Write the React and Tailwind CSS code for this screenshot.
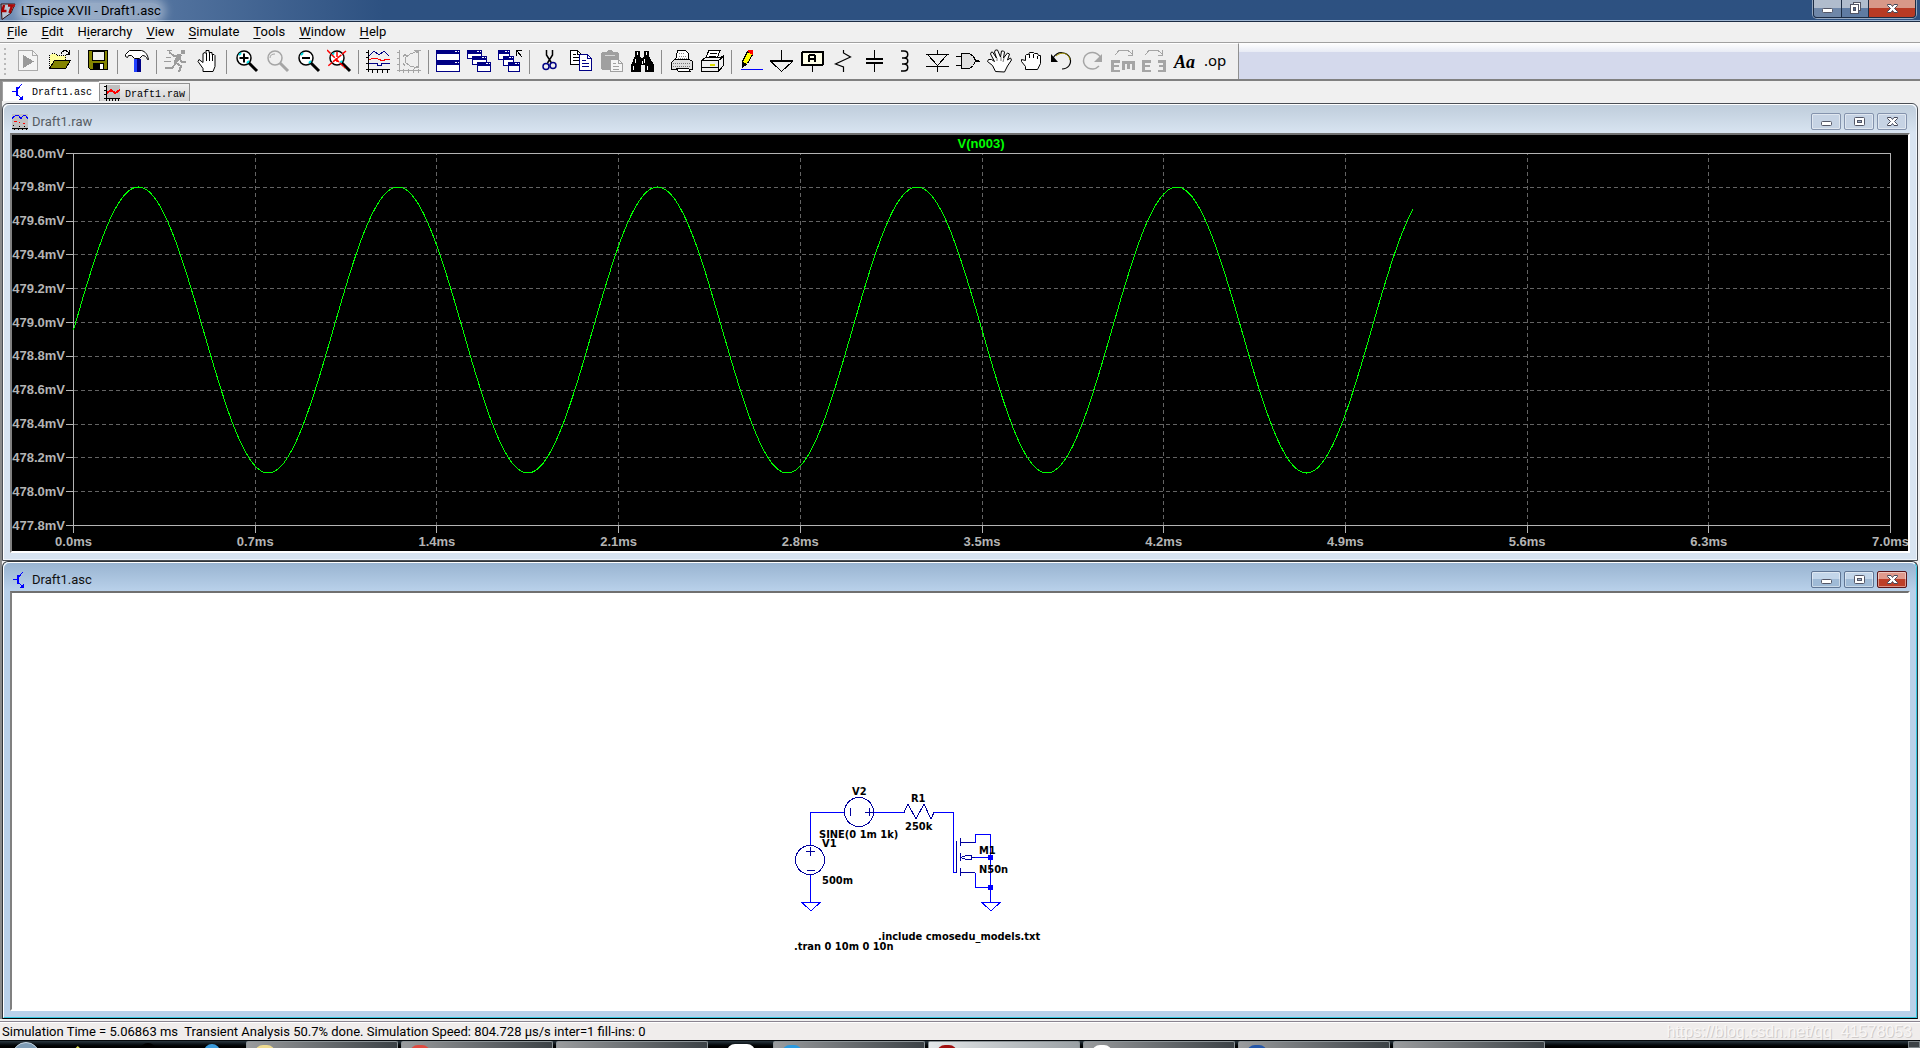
import React from "react";

const UI_FONT = "font-['Roboto','Noto_Sans_CJK_SC',sans-serif]";

/* ---------- toolbar drawings, each on a 25 x 24 grid ---------- */

const Lens = ({ ring, handle, children }) => (
  <>
    <circle cx="10" cy="9" r="7" fill={ring === "#000" ? "#fff" : "#efefef"} stroke={ring} strokeWidth="1.500" />
    {ring === "#000" && <path d="M5 6l2-2M13 14l2-2" stroke="#00e0e8" strokeWidth="2" />}
    <path d="M15 14l8 8" stroke={handle} strokeWidth="3" />
    {children}
  </>
);

const Sheet = ({ x, y, c }) => (
  <g transform={`translate(${x} ${y})`}>
    <path d="M.5 .5h7l4 4v10h-11z" fill="#fff" stroke={c} />
    <path d="M7.500 .5v4h4M3 4.500h3M3 7.500h6M3 10.500h6" fill="none" stroke={c} />
  </g>
);

const MiniWin = ({ x, y, w = 12, h = 11 }) => (
  <g transform={`translate(${x} ${y})`}>
    <rect x=".5" y=".5" width={w} height={h} fill="#fff" stroke="#000084" />
    <rect width={w + 1} height="4" fill="#000084" />
    <path d={`M${w - 4} 1.5h2M${w - 1} 1.5h1`} stroke="#fff" />
  </g>
);

const icons = {
  Run: (
    <>
      <path d="M2.500 1.500h14l5 5v15h-19z" fill="#f4f4f4" stroke="#aaa" />
      <path d="M16.500 1.500v5h5" fill="none" stroke="#aaa" />
      <path d="M7 6l11 6.500-11 6.500z" fill="#999" />
    </>
  ),
  Open: (
    <>
      <path d="M2.500 19V6.500l2-2h4l2 2h8V12" fill="#ffff9c" stroke="#000" strokeDasharray="1 1" />
      <path d="M2.500 19.500l5-8h16l-5 8z" fill="#848400" stroke="#000" />
      <path d="M14 4.500c2-4 6-4 8 0M22.500 1v4h-4" fill="none" stroke="#000" />
    </>
  ),
  Save: (
    <>
      <path d="M2.500 1.500h19v19h-17l-2-2z" fill="#848400" stroke="#000" />
      <rect x="6" y="2" width="12" height="9" fill="#efefef" stroke="#000" />
      <rect x="7" y="14" width="11" height="7" fill="#000" />
      <rect x="14" y="15" width="3" height="5" fill="#fff" />
    </>
  ),
  "Control panel": (
    <>
      <path d="M.5 5.500l4-4h12c4 1 6 4 7 9h-1c-1-3-3-4-5-4l-3 3h-5l-3-3h-3l-1 2-2-1z" fill="#fff" stroke="#000" />
      <rect x="9" y="10" width="3" height="13" fill="#2040ff" />
      <rect x="12" y="10" width="4" height="13" fill="#000084" />
    </>
  ),
  Runner: (
    <g fill="none" stroke="#9c9c9c" strokeWidth="2">
      <circle cx="19" cy="3" r="1.500" fill="#9c9c9c" />
      <path d="M17 6l-5 8 5 3-2 6M12 14l-4 5H1M17 6l-7 1-5-4M15 9l3 4h4" />
      <path d="M15 6l-4 8" strokeWidth="4" />
      <path d="M2 8h5M0 12h7M3 1h5" strokeWidth="1" />
    </g>
  ),
  Halt: (
    <>
      <path d="M8 22.500v-3l-5-7 1-2 4 3V4.500l2-1 1 1V1.500h3v2h3v2h2l1 1v11l-2 5z" fill="#fff" stroke="#000" />
      <path d="M11.500 4v8M14.500 3v9M17.500 5v7" stroke="#000" />
    </>
  ),
  "Zoom in": <Lens ring="#000" handle="#000"><path d="M5.500 9h9M10 4.500v9" stroke="#000" strokeWidth="2" /></Lens>,
  "Zoom back": <Lens ring="#a5a5a5" handle="#a5a5a5"><path d="M5 9c0-3 2-4 5-4" fill="none" stroke="#a5a5a5" /></Lens>,
  "Zoom out": <Lens ring="#000" handle="#000"><path d="M6 9h8" stroke="#000" strokeWidth="2" /></Lens>,
  "Zoom full": (
    <Lens ring="#000" handle="#000">
      <path d="M0 1l18 18M19 2L1 17M10 3v10" stroke="#f00" strokeWidth="1.500" strokeDasharray="5 1" />
    </Lens>
  ),
  "Autorange": (
    <g fill="none">
      <path d="M2.500 1v22M0 20.500h24M0 3.500h2M0 8.500h2M0 14.500h2M6.500 21v3M11.500 21v3M16.500 21v3M21.500 21v3" stroke="#000" />
      <path d="M3 7l5-5 5 4 5-4 5 5" stroke="#000084" />
      <path d="M3 11l4-2 5 1 5 2 3-2h4" stroke="#f00" />
      <path d="M3 14.500h8v2h4v-2h9" stroke="#000084" />
    </g>
  ),
  FFT: (
    <g fill="none" stroke="#a5a5a5">
      <path d="M2.500 1v22M0 21.500h24M0 3.500h2M0 9.500h2M0 15.500h2M6.500 20v4M11.500 20v4M16.500 20v4M21.500 20v4M21.500 1v18M19 1.500h5" />
      <path d="M21 2l-8 3-5 4v4l5 4 8 2M6 8l2-3 2 3M6 14l2 3M17 1l4 3M17 20l4-3" />
    </g>
  ),
  "Tile windows": <><MiniWin x={0} y={1} w={23} h={10} /><MiniWin x={0} y={12} w={23} h={10} /></>,
  "Cascade windows": <><MiniWin x={0} y={1} w={14} h={8} /><MiniWin x={5} y={7} w={14} h={8} /><MiniWin x={10} y={13} w={13} h={9} /></>,
  "Close windows": (
    <>
      <MiniWin x={0} y={1} w={11} h={9} /><MiniWin x={5} y={7} w={10} h={9} /><MiniWin x={10} y={13} w={11} h={9} />
      <path d="M18.500 7V1.500H24M19 2l5 6" stroke="#000" fill="none" />
    </>
  ),
  Cut: (
    <g fill="none">
      <path d="M9.500 1v5l5 8M15.500 1v5l-5 8" stroke="#000" strokeWidth="1.500" />
      <circle cx="9" cy="17.500" r="3" stroke="#000084" strokeWidth="1.500" />
      <circle cx="16" cy="16.500" r="3" stroke="#000084" strokeWidth="1.500" />
    </g>
  ),
  Copy: <><Sheet x={2} y={1} c="#000" /><g transform="translate(11 5)"><path d="M.5 .5h8l4 4v12h-12z" fill="#fff" stroke="#000084" /><path d="M8.500 .5v4h4M3 6.500h4M3 9.500h7M3 12.500h7" fill="none" stroke="#000084" /></g></>,
  Paste: (
    <>
      <path d="M2 4l2-1h4l1-2h4l1 2h4l2 1v17H3l-1-1z" fill="#a0a0a0" />
      <path d="M6 6.500h10" stroke="#d8d8d8" />
      <g transform="translate(11 10)"><path d="M.5 .5h8l4 4v8h-12z" fill="#f4f4f4" stroke="#a0a0a0" /><path d="M3 4.500h3M3 7.500h6M3 10h6M8.500 .5v4h4" fill="none" stroke="#a0a0a0" /></g>
    </>
  ),
  Find: (
    <>
      <path d="M5 2h5v5l2 3 2-3V2h5v5l5 9v7h-9v-7h-4v7H1v-7l4-9z" fill="#000" />
      <path d="M7.500 3v3M16.500 3v3M5.500 10v4M14.500 10v4M3.500 17v4M17.500 17v4M12.500 12v3" stroke="#fff" />
    </>
  ),
  "Print": (
    <>
      <path d="M6.500 11l2-9.500h8l3 3V11" fill="#fff" stroke="#000" />
      <path d="M10 4.500h5M9.500 7h8M9 9.500h9" stroke="#888" strokeDasharray="1 1" />
      <path d="M2.500 13.500l3-3h15l3 2v8h-21z" fill="#ddd" stroke="#000" />
      <path d="M4 14.500h18M4 17.500h18" stroke="#777" strokeDasharray="1 1" />
      <path d="M7.500 19.500h12l2 3h-12z" fill="#fff" stroke="#000" />
    </>
  ),
  "Print setup": (
    <>
      <path d="M5 10l4-8.500h11L17 10" fill="#fff" stroke="#000" />
      <path d="M10 4.500h7M9 7h7" stroke="#000" />
      <path d="M1.500 11.500l4-3h15l3-2v10l-5 6h-17z" fill="#efefef" stroke="#000" />
      <path d="M1.500 11.500h17l5-4M18.500 11.500v11M2 18.500h17" fill="none" stroke="#000" />
      <path d="M10 15.500h5" stroke="#dede00" strokeWidth="2" />
    </>
  ),
  "Draw wire": (
    <>
      <path d="M3.500 12.500l5-10 5 3-5 9-4 3z" fill="#ff0" stroke="#000" />
      <path d="M3 12v7l5-4z" fill="#000" />
      <path d="M9 1h5v5l-5-3z" fill="#f00" />
      <path d="M2 20.500h22" stroke="#00f" />
    </>
  ),
  Ground: <><path d="M11.500 1v10" stroke="#000" /><path d="M0 12h23" stroke="#000" strokeWidth="2" /><path d="M1.500 13l10 9.500L22 13" fill="none" stroke="#000" /></>,
  "Label net": (
    <>
      <rect x="1" y="3" width="21" height="13" rx="1" fill="#ffffe7" stroke="#000" strokeWidth="2" />
      <path d="M11.500 17v6" stroke="#000" />
      <path d="M8 13V7l1-1h4l1 1v6M8 10h6" fill="none" stroke="#000" strokeWidth="2" />
    </>
  ),
  Resistor: <path d="M11.500 1v3l7 4-15 7 8 3v5" fill="none" stroke="#000" strokeWidth="1.200" />,
  Capacitor: <><path d="M11.500 1v8M11.500 15v8" stroke="#000" /><path d="M3 10h17M3 14h17" stroke="#000" strokeWidth="2" /></>,
  Inductor: <path d="M7 2h3c5 0 5 7 0 7H8h2c5 0 5 6 0 6H8h2c5 0 5 7 0 7H7" fill="none" stroke="#000" strokeWidth="1.500" />,
  Diode: <path d="M12.500 1v4M1 5.500h23M3 6l9.500 10.500L22 6M1 17.500h23M12.500 17v6" fill="none" stroke="#000" />,
  Component: <><path d="M5.500 4.500h8l4 3 2 4-2 5-4 3h-8z" fill="#e0e0e0" stroke="#000" /><path d="M0 7.500h5M0 16.500h5M19 12h5" stroke="#000" /><path d="M20 11h3v2h-3z" fill="#000" /></>,
  Move: (
    <>
      <path d="M8.500 22.500l-3-6-5-4 1-2h3l3 2L3.500 5l1-2h1l4 6-2-6 1-2h2l3 7 1-6h2l1 1-1 6 4-5 2 1-2 6 3-2 1 2-4 6-3 6z" fill="#fff" stroke="#000" />
      <path d="M10 9v3M14 8v4M17 9l-1 4" stroke="#777" />
    </>
  ),
  Drag: (
    <>
      <path d="M7.500 20.500v-3l-4-5v-2l4 1V6.500l1-1h2l1-2h4l1 1h3l1 2h2v8l-3 6z" fill="#fff" stroke="#000" />
      <path d="M11.500 5v4M15.500 5v4M19.500 7v3" stroke="#000" />
    </>
  ),
  Undo: <><path d="M4 9c5-8 14-6 17 0 2 6-2 11-8 11" fill="none" stroke="#000" strokeWidth="1.200" /><path d="M7 7c5-5 13-3 14 4" fill="none" stroke="#a09000" /><path d="M2 5v8h7z" fill="#000" /></>,
  Redo: <><path d="M21 9C17 2 9 2 5 7c-4 7 1 13 8 13 3 0 5-2 6-3" fill="none" stroke="#a5a5a5" strokeWidth="1.500" /><path d="M22 5v8h-8z" fill="#a5a5a5" /></>,
  Rotate: (
    <>
      <path d="M0 11h9v3H3v2h5v2H3v3h6v2H0zM11 12h13v9h-3v-6h-2v5h-3v-5h-2v6h-3z" fill="#a5a5a5" />
      <path d="M4 6l4-4.500h9l5 4M21.500 1v5H17" fill="none" stroke="#a5a5a5" />
    </>
  ),
  Mirror: (
    <>
      <path d="M0 11h9v3H3v2h5v2H3v3h6v2H0zM24 11h-8v3h5v2h-4v2h4v3h-5v2h8z" fill="#a5a5a5" />
      <path d="M3 6l4-4.500h9l5 4M20.500 1v5H16" fill="none" stroke="#a5a5a5" />
    </>
  ),
  Text: <text x="1" y="19" fontFamily="'Liberation Serif', serif" fontWeight="700" fontStyle="italic" fontSize="18">Aa</text>,
  "SPICE directive": <text x="0" y="17" fontFamily="'Noto Sans', sans-serif" fontSize="15">.op</text>,
};

const groups = [
  ["Run", "Open"], ["Save"], ["Control panel"], ["Runner", "Halt"],
  ["Zoom in", "Zoom back", "Zoom out", "Zoom full"], ["Autorange", "FFT"],
  ["Tile windows", "Cascade windows", "Close windows"], ["Cut", "Copy", "Paste", "Find"],
  ["Print", "Print setup"],
  ["Draw wire", "Ground", "Label net", "Resistor", "Capacitor", "Inductor", "Diode", "Component",
    "Move", "Drag", "Undo", "Redo", "Rotate", "Mirror", "Text", "SPICE directive"],
];
const smooth = new Set(["Text", "SPICE directive", "Undo", "Redo", "Inductor", "Resistor", "Cut",
  "Zoom in", "Zoom out", "Zoom back", "Zoom full", "Control panel", "Move", "Drag", "Halt"]);

function Toolbar() {
  return (
    <div className="flex h-[39px] border-t border-b-2 border-t-[#a0a0a0] border-b-[#808080]">
      <div className="flex items-center border-t border-r border-t-white border-r-[#909090] bg-[#efefef] pr-1.5 pl-1">
        <span className="mr-[7px] flex flex-col gap-[3px]">
          {[0, 1, 2, 3, 4, 5].map((i) => <i key={i} className="h-0.5 w-0.5 bg-[#b8b8b8]" />)}
        </span>
        {groups.map((g, gi) => (
          <React.Fragment key={gi}>
            {gi > 0 && <span className="mr-1 ml-[3px] h-6 w-px bg-[#8c8c8c]" />}
            {g.map((n) => (
              <button key={n} aria-label={n} className="flex w-[31px] justify-center pb-px">
                <svg width="25" height="24" viewBox="0 0 25 24" shapeRendering={smooth.has(n) ? "auto" : "crispEdges"}>{icons[n]}</svg>
              </button>
            ))}
          </React.Fragment>
        ))}
      </div>
      <div className="flex-1 bg-[#d4d9ec]">
        <div className="h-[9px] bg-linear-to-b from-white to-[#e8ebf5]" />
      </div>
    </div>
  );
}

/* ---------- window chrome ---------- */

const TransistorIcon = () => (
  <svg width="16" height="16" viewBox="0 0 16 16" fill="none" stroke="#00f" shapeRendering="crispEdges">
    <path d="M1 7.500h5M11 0L6.500 5M6 10l5 5" />
    <path d="M6 3v9" strokeWidth="2" />
    <path d="M12 11v5H7z" fill="#00f" stroke="none" />
  </svg>
);

const WaveIcon = () => (
  <svg width="16" height="16" viewBox="0 0 16 16" fill="none" shapeRendering="crispEdges">
    <rect width="16" height="16" fill="#c0c0c0" />
    <path d="M0 4.500l4-3.500h2l3 3.500 3-3.500h1l3 3.500" stroke="#00f" />
    <path d="M2 7.500h3M7 8.500h1M11 9.500h2" stroke="#f00" />
    <path d="M0 14.500h16M1 11.500h1M7 12.500h1M12 12.500h1M2.500 15v1M6.500 15v1M10.500 15v1M14.500 15v1" stroke="#000" />
  </svg>
);

const RawTabIcon = () => (
  <svg width="16" height="16" viewBox="0 0 16 16" fill="none" shapeRendering="crispEdges">
    <rect x="2" width="14" height="13" fill="#c0c0c0" />
    <path d="M2.500 0v16M0 1.500h2M0 5.500h2M0 9.500h2M0 13.500h16M5.500 14v2M8.500 14v2M11.500 14v2M14.500 14v2" stroke="#000" />
    <path d="M3 8l4-3 4 3 5-3" stroke="#f00" strokeWidth="2" />
  </svg>
);

const Logo = () => (
  <svg width="16" height="18" viewBox="0 0 16 18">
    <path d="M1 2h14l-4 9-9 6.500z" fill="#b8c4d4" stroke="#301010" />
    <path d="M4 3L2.500 9h4M8 3.500h7M12 4L9.500 11" fill="none" stroke="#a80000" strokeWidth="2.500" />
  </svg>
);

const glyphs = {
  Minimize: <rect x="2.500" y="6.500" width="10" height="4" rx="1" fill="#fff" stroke="#535666" />,
  Maximize: <><rect x="2.500" y="2.500" width="10" height="8" rx="1" fill="#fff" stroke="#535666" /><rect x="5.500" y="5.500" width="4" height="2" fill="#9fb0c8" stroke="#535666" /></>,
  Restore: <><rect x="5.500" y=".5" width="7" height="8" fill="#fff" stroke="#535666" /><rect x="2.500" y="2.500" width="8" height="9" fill="#fff" stroke="#535666" /><rect x="5.500" y="5.500" width="2" height="3" fill="#4c6a96" stroke="#535666" /></>,
  Close: <path d="M2.500 2.500h3.500l1.500 2 1.500-2h3.500v1L9.500 6.500l3 3v1H9l-1.500-2-1.500 2H2.500v-1l3-3-3-3z" fill="#fff" stroke="#474a5a" />,
};

const Glyph = ({ name }) => (
  <svg width="15" height="13" viewBox="0 0 15 13" className="mx-auto">{glyphs[name]}</svg>
);

function MdiButtons({ active }) {
  const idle = active
    ? "border-[#5f7594] bg-linear-to-b from-[#c3d6ea] from-50% to-[#9fbad6] to-50%"
    : "border-[#8493ad] bg-[#c6d3e4]";
  const close = active ? "border-[#5a1418] bg-linear-to-b from-[#e09a8c] from-50% to-[#bd3f28] to-50%" : idle;
  return (
    <div className="flex gap-[3px]">
      {["Minimize", "Maximize", "Close"].map((n) => (
        <button key={n} aria-label={n} className={`flex h-[17px] w-[30px] items-center rounded-xs border shadow-[inset_0_0_0_1px_rgba(255,255,255,0.45)] ${n === "Close" ? close : idle}`}>
          <Glyph name={n} />
        </button>
      ))}
    </div>
  );
}

function ChildWindow({ title, icon, active, className = "", children }) {
  const frame = active ? "border-[#303438] border-b-black bg-[#b9d1ea]" : "border-[#4a4e54] bg-[#d8e4f1]";
  const bar = active ? "from-[#99b4d1] to-[#b9d1ea]" : "from-[#bfcddb] to-[#d8e4f1]";
  return (
    <section className={`flex flex-col rounded-t-md border ${frame} ${className}`}>
      <div className={`flex flex-1 flex-col rounded-t-md border border-t-white border-l-white px-1.5 pb-1.5 ${active ? "border-r-[#35c8e0] border-b-[#35c8e0]" : "border-r-[#eef4fa] border-b-[#eef4fa]"}`}>
        <header className={`-mx-1.5 flex h-7 items-center rounded-t-md bg-linear-to-b pt-[5px] pr-[9px] pl-2 ${bar}`}>
          {icon}
          <h2 className={`ml-1 flex-1 text-[13px] leading-4 ${active ? "text-[#101010]" : "text-[#565c63]"}`}>{title}</h2>
          <MdiButtons active={active} />
        </header>
        <div className={`flex flex-1 flex-col border-2 border-t-[#707070] border-r-white border-b-white border-l-[#808080] ${active ? "bg-white" : "bg-black"}`}>
          {children}
        </div>
      </div>
    </section>
  );
}

/* ---------- waveform plot ---------- */

const X0 = 61.5, X1 = 1878.5, Y0 = 18.5, Y1 = 390.5;
const volts = Array.from({ length: 12 }, (_, i) => (480 - i * 0.2).toFixed(1) + "mV");
const times = Array.from({ length: 11 }, (_, i) => (i * 0.7).toFixed(1) + "ms");
const px = (t) => X0 + (t / 7) * (X1 - X0);
const trace = Array.from({ length: 517 }, (_, i) => {
  const t = i / 100;
  return `${px(t).toFixed(1)},${(195 - 143 * Math.sin(2 * Math.PI * t)).toFixed(1)}`;
}).join(" ");

function Plot() {
  return (
    <svg viewBox="0 0 1896 416" className="block h-auto w-full" fontFamily="'Liberation Sans', Arial, sans-serif" fontWeight="700" fontSize="13" role="img" aria-label="V(n003) waveform">
      <g fill="#b4b4b4" stroke="none">
        {volts.map((v, i) => <text key={v} x="53" textAnchor="end" y={Math.round(Y0 + (i * (Y1 - Y0)) / 11) + 4}>{v}</text>)}
        {times.map((v, i) => <text key={v} x={X0 + i * 181.7} textAnchor="middle" y="411">{v}</text>)}
      </g>
      <g shapeRendering="crispEdges" fill="none">
        <g stroke="#646464" strokeDasharray="4 3">
          {volts.slice(1, 11).map((v, i) => { const y = Math.floor(Y0 + ((i + 1) * (Y1 - Y0)) / 11) + 0.5; return <path key={v} d={`M${X0} ${y}H${X1}`} />; })}
          {times.slice(1, 10).map((v, i) => { const x = Math.floor(X0 + (i + 1) * 181.7) + 0.5; return <path key={v} d={`M${x} ${Y1}V${Y0}`} />; })}
        </g>
        <g stroke="#b4b4b4">
          <rect x={X0} y={Y0} width={X1 - X0} height={Y1 - Y0} />
          {volts.map((v, i) => { const y = Math.floor(Y0 + (i * (Y1 - Y0)) / 11) + 0.5; return <path key={v} d={`M54 ${y}H${X0}`} />; })}
          {times.map((v, i) => { const x = Math.floor(X0 + i * 181.7) + 0.5; return <path key={v} d={`M${x} ${Y1}V398`} />; })}
        </g>
        <polyline points={trace} stroke="#00ff00" />
      </g>
      <text x="969" y="13" textAnchor="middle" fill="#00ff00">V(n003)</text>
    </svg>
  );
}

/* ---------- schematic ---------- */

const labels = [
  ["V2", 82, 25], ["R1", 141, 32], ["SINE(0 1m 1k)", 49, 68], ["V1", 52, 77], ["500m", 52, 114],
  ["250k", 135, 60], ["M1", 209, 84], ["N50n", 209, 103], [".include cmosedu_models.txt", 108, 170], [".tran 0 10m 0 10n", 24, 180],
];

function Schematic() {
  return (
    <svg viewBox="0 0 1896 416" className="block h-auto w-full" role="img" aria-label="Draft1 schematic">
      <g transform="translate(758 177)">
        <g fill="none" stroke="#0000ff" shapeRendering="crispEdges">
          <path d="M40.500 75V42.500H75M103 42.500h31M164 42.500h19.500v60h3M205.500 72.500v-8h15V132M205 87.500h15M205.500 102.500v15h15M40.500 105v27" />
          <path d="M32 132.500h18l-9 8.500zM212 132.500h18l-9 8.500z" />
          <path d="M218 85h5v5h-5zM218 115h5v5h-5z" fill="#0000ff" stroke="none" />
        </g>
        <g fill="none" stroke="#00009c" shapeRendering="crispEdges">
          <circle cx="89" cy="42" r="14.500" />
          <circle cx="40" cy="90" r="14.500" />
          <path d="M80.500 38v8M95 42.500h9M99.500 38v8M36 81.500h9M40.500 77v9M37 100.500h8" />
          <path d="M134 42.500l4-8.500 8 15 8-15 7 15 3-6.500" />
          <path d="M186.500 71v32M190.500 68v8M190.500 83v8M190.500 98v8M190 72.500h15M190 102.500h15M191 87.500l5-2h5v4h-5zM201 87.500h4" />
        </g>
        <g fontFamily="'DejaVu Sans Condensed', 'DejaVu Sans', sans-serif" fontWeight="700" fontSize="11">
          {labels.map(([s, x, y]) => <text key={s} x={x} y={y}>{s}</text>)}
        </g>
      </g>
    </svg>
  );
}

/* ---------- desktop taskbar, only its top edge in view ---------- */

const Task = ({ color, lit }) => (
  <span className={`flex w-[152px] justify-start rounded-t-xs border border-b-0 border-[#8c9498] pl-2 ${lit ? "bg-linear-to-r from-[#e4e8ea] to-[#9aa0a4]" : "bg-linear-to-r from-[#9a9c9e] to-[#3c4246]"}`}>
    <i className="mt-[3px] h-4 w-5 rounded-full" style={{ background: color }} />
  </span>
);

function Taskbar() {
  return (
    <footer className="flex h-2 gap-[3px] overflow-hidden border-t border-[#05090c] bg-linear-to-b from-[#2a3740] to-black">
      <div className="flex w-[243px] shrink-0 items-start">
        <i className="mt-px ml-3 h-7 w-7 rounded-full border border-[#c8d8e4] bg-[#7d9bb4]" />
        <i className="mt-1 ml-10 h-4 w-1 -rotate-45 bg-[#d8d84c]" />
        <i className="mt-0.5 ml-14 h-4 w-4 rounded-full bg-black" />
        <i className="mt-[3px] ml-12 h-4 w-4 rounded-full bg-[#3a9bdc]" />
      </div>
      <Task color="#f0dc90" />
      <Task color="#e04a40" />
      <Task color="transparent" />
      <span className="w-[59px] shrink-0"><i className="mx-auto mt-[3px] block h-4 w-7 rounded-full bg-white" /></span>
      <Task color="#2a9ae0" />
      <Task color="#a01010" lit />
      <Task color="#ffffff" />
      <Task color="#2456a8" />
      <Task color="transparent" />
      <span className="flex-1" />
      <span className="w-3 border border-[#7c8488] bg-[#3c4246]" />
    </footer>
  );
}

const menus = ["File", "Edit", "Hierarchy", "View", "Simulate", "Tools", "Window", "Help"];
const hot = { Hierarchy: 1 };

export default function App() {
  return (
    <div className={`flex min-h-screen flex-col bg-[#f0f0f0] text-black ${UI_FONT}`}>
      <header className="flex h-[22px] items-start justify-between border-b border-[#1c2c44] bg-linear-to-r from-[#6f8db5] via-[#2d5181] via-20% to-[#2d5181] shadow-[inset_0_-1px_0_#9fb6d2]">
        <div className="flex h-[22px] items-center">
          <Logo />
          <h1 className="ml-[5px] rounded-full bg-white/35 text-[13px] leading-4 shadow-[0_0_8px_5px_rgba(255,255,255,0.35)]">LTspice XVII - Draft1.asc</h1>
        </div>
        <div className="mr-1 flex h-[18px] overflow-hidden rounded-b-sm border border-t-0 border-[#1c2c44] shadow-[0_0_0_1px_rgba(255,255,255,0.5)]">
          <button aria-label="Minimize" className="w-7 border-r border-[#1c2c44] bg-linear-to-b from-[#b0bccd] from-50% to-[#6f87a8] to-50%"><Glyph name="Minimize" /></button>
          <button aria-label="Restore" className="w-[27px] border-r border-[#1c2c44] bg-linear-to-b from-[#b0bccd] from-50% to-[#5f7ba2] to-50%"><Glyph name="Restore" /></button>
          <button aria-label="Close" className="w-[46px] bg-linear-to-b from-[#d89888] from-50% to-[#b83a24] to-50%"><Glyph name="Close" /></button>
        </div>
      </header>

      <nav className="flex h-5 items-center">
        {menus.map((m) => {
          const k = hot[m] ?? 0;
          return <button key={m} className="px-[7px] text-[13px] leading-5">{m.slice(0, k)}<u className="underline-offset-2">{m[k]}</u>{m.slice(k + 1)}</button>;
        })}
      </nav>

      <Toolbar />

      <main className="flex flex-1 flex-col border-l-2 border-[#8a8a8a] pr-0.5">
        <div className="flex h-[22px] items-start font-['Liberation_Mono',monospace] text-[10px]">
          <button className="flex h-5 w-[97px] items-center border-t border-l border-[#a0a0a0] bg-white pl-2">
            <TransistorIcon /><span className="ml-[5px] pt-0.5">Draft1.asc</span>
          </button>
          <button className="mt-0.5 flex h-[18px] w-[91px] items-center border-t border-r border-l border-[#909090] bg-linear-to-b from-[#f0f0f0] to-[#d4d4d4] pl-1">
            <RawTabIcon /><span className="ml-[5px] pt-[3px]">Draft1.raw</span>
          </button>
        </div>
        <ChildWindow title="Draft1.raw" icon={<WaveIcon />}><Plot /></ChildWindow>
        <ChildWindow title="Draft1.asc" icon={<TransistorIcon />} active className="flex-1"><Schematic /></ChildWindow>
      </main>

      <div className="mt-0.5 flex h-[19px] items-center justify-between border-t border-[#8a8490] bg-[#f0edec] pt-px pr-2 pl-0.5 shadow-[inset_0_1px_0_#fff]">
        <p className="text-[13px] leading-4 whitespace-pre">Simulation Time = 5.06863 ms  Transient Analysis 50.7% done. Simulation Speed: 804.728 µs/s inter=1 fill-ins: 0</p>
        <p className="font-['Liberation_Sans',sans-serif] text-[16px] leading-4 text-[#f8f6f5] [text-shadow:1px_1px_0_#cfcbca]">https://blog.csdn.net/qq_41578053</p>
      </div>
      <Taskbar />
    </div>
  );
}
